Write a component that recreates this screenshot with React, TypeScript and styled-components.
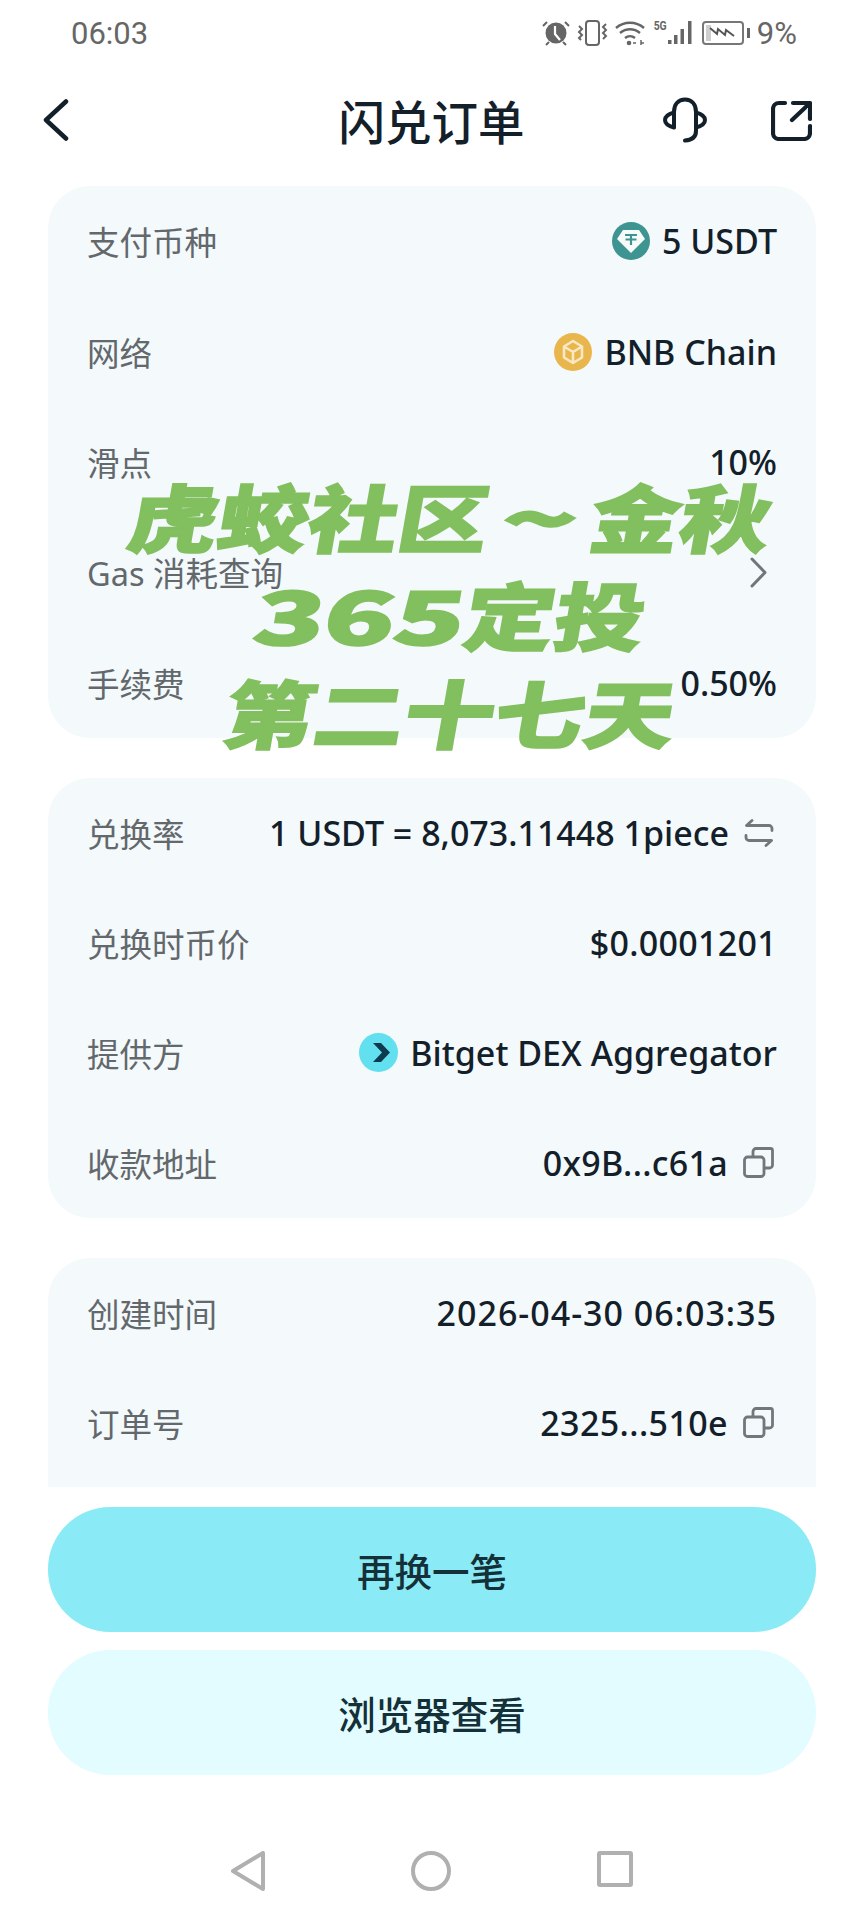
import styled, { createGlobalStyle } from "styled-components";
import type { ReactNode } from "react";

const GlobalStyle = createGlobalStyle`
  html, body {
    margin: 0;
    padding: 0;
    background: #fff;
  }
  * {
    box-sizing: border-box;
  }
`;

const Page = styled.div`
  position: relative;
  width: 864px;
  height: 1920px;
  overflow: hidden;
  display: flex;
  flex-direction: column;
  background: #fff;
  font-family: "Noto Sans", "Noto Sans CJK SC", sans-serif;
`;

const StatusBar = styled.div`
  height: 66px;
  padding: 0 67px 0 71px;
  display: flex;
  align-items: center;
  justify-content: space-between;
  color: #666;
  font-family: Roboto, "Noto Sans", sans-serif;
  font-size: 31px;
`;

const StatusIcons = styled.div`
  display: flex;
  align-items: center;
  gap: 7px;
`;

const FiveG = styled.span`
  font-size: 13px;
  font-weight: 700;
  align-self: flex-start;
  margin: 3px -7px 0 0;
  transform: scaleX(0.8);
`;

const Header = styled.div`
  height: 108px;
  padding: 0 52px 0 43px;
  display: grid;
  grid-template-columns: 1fr auto 1fr;
  align-items: center;
`;

const Title = styled.h1`
  margin: 0;
  font-size: 46.5px;
  font-weight: 500;
  color: #13202a;
  position: relative;
  left: 4px;
`;

const HeaderActions = styled.div`
  display: flex;
  align-items: center;
  justify-content: flex-end;
  gap: 64px;
`;

const Scroller = styled.div`
  height: 1313px;
  padding: 12px 48px 0;
  overflow: hidden;
  display: flex;
  flex-direction: column;
  gap: 40px;
`;

const Card = styled.section<{ $minHeight?: number }>`
  flex-shrink: 0;
  min-height: ${(p) => p.$minHeight ?? 0}px;
  padding: 0 39px;
  border-radius: 42px;
  background: #f4f9fb;
`;

const Row = styled.div<{ $height: number }>`
  height: ${(p) => p.$height}px;
  display: flex;
  align-items: center;
  justify-content: space-between;
`;

const Label = styled.span`
  color: #62686c;
  font-size: 32.5px;
`;

const Value = styled.span<{ $spacing?: number }>`
  display: flex;
  align-items: center;
  gap: 12px;
  color: #13202a;
  font-size: 34px;
  font-weight: 500;
  letter-spacing: ${(p) => p.$spacing ?? 0}px;
`;

const TrailingIcon = styled.span<{ $inset: number }>`
  display: flex;
  margin-left: 3px;
  margin-right: ${(p) => p.$inset}px;
`;

const Footer = styled.div`
  padding: 20px 48px 0;
  display: flex;
  flex-direction: column;
  gap: 18px;
`;

const ActionButton = styled.button<{ $primary?: boolean }>`
  height: 125px;
  border: none;
  border-radius: 62px;
  background: ${(p) => (p.$primary ? "#8aebf6" : "#e3fcff")};
  color: #143038;
  font-family: inherit;
  font-size: 37.5px;
  font-weight: 500;
`;

const NavBar = styled.div`
  flex: 1;
  padding: 76px 0 0 231px;
  display: flex;
  align-items: flex-start;
  gap: 146px;
`;

const Overlay = styled.div`
  position: absolute;
  top: 466px;
  left: 38px;
  right: 0;
  display: flex;
  flex-direction: column;
  align-items: center;
  color: #82bf5e;
  font-family: "Noto Sans CJK SC", sans-serif;
  font-size: 90px;
  font-weight: 900;
  line-height: 98px;
  white-space: nowrap;
  -webkit-text-stroke: 2px #82bf5e;
`;

const OverlayLine = styled.div`
  transform: skewX(-10deg) scaleY(0.82);
`;

const WideGlyphs = styled.span<{ $scale: number; $width: number }>`
  display: inline-block;
  width: ${(p) => p.$width}px;
  text-align: center;
  transform: scaleX(${(p) => p.$scale});
`;

const Back = () => (
  <svg width="26" height="42" viewBox="0 0 26 42" fill="none" stroke="#13202a" strokeWidth="4.5" strokeLinecap="round" strokeLinejoin="round">
    <path d="M23 2.500 3 21l20 18.500" />
  </svg>
);

const Headset = () => (
  <svg width="44" height="46" viewBox="0 0 44 46" fill="none" stroke="#13202a" strokeWidth="4" strokeLinecap="round" strokeLinejoin="round">
    <path d="M11 30V15C11 7 15.500 2.500 22 2.500S33 7 33 15v19c0 6-3.500 9-11 9.500" />
    <path d="M11 15.500C5.500 17 2 19.500 2 23s3.500 6 9 7.500" />
    <path d="M33 15.500c5.500 1.500 9 4 9 7.500s-3.500 6-9 7.500" />
  </svg>
);

const Share = () => (
  <svg width="41" height="41" viewBox="0 0 41 41" fill="none" stroke="#13202a" strokeWidth="4.2" strokeLinecap="round" strokeLinejoin="round">
    <path d="M14 3H8a6 6 0 0 0-6 6v24a6 6 0 0 0 6 6h25a6 6 0 0 0 6-6v-7" />
    <path d="M22 3h17v16M38 4 21 20" />
  </svg>
);

const Alarm = () => (
  <svg width="28" height="26" viewBox="0 0 28 26" fill="none">
    <circle cx="14" cy="13" r="10.500" fill="#666" />
    <path d="M13 6v8l5 6" stroke="#fff" strokeWidth="2.200" />
    <path d="M1 6l4-4M27 6l-4-4M4 25l3-3M24 25l-3-3" stroke="#666" strokeWidth="2" />
  </svg>
);

const Vibrate = () => (
  <svg width="31" height="26" viewBox="0 0 31 26" fill="none" stroke="#666" strokeWidth="2">
    <rect x="9" y="1" width="13" height="24" rx="3" />
    <path d="M2 6l3 3-3 3 3 3-3 3 2 2M29 4l-3 3 3 3-3 3 3 3-3 3" />
  </svg>
);

const Wifi = () => (
  <svg width="30" height="26" viewBox="0 0 30 26" fill="none" stroke="#666" strokeWidth="2.400">
    <path d="M1 8C9 1 21 1 29 8M5 13c6-5 14-5 20 0M10 18c3-2.500 7-2.500 10 0" />
    <circle cx="14" cy="23" r="2.300" fill="#666" stroke="none" />
    <path d="M21 23l-3 0M26 20v5M29 23h-3" strokeWidth="1.500" />
  </svg>
);

const Signal = () => (
  <svg width="27" height="26" viewBox="0 0 27 26" fill="#666">
    <rect x="0" y="20" width="3.500" height="4" />
    <rect x="6" y="15" width="3.500" height="9" />
    <rect x="12.500" y="9" width="3.500" height="15" />
    <rect x="20" y="1" width="3.500" height="23" />
  </svg>
);

const Battery = () => (
  <svg width="48" height="26" viewBox="0 0 48 26" fill="none">
    <rect x="1" y="2" width="40" height="22" rx="3" stroke="#777" strokeWidth="2" />
    <rect x="4" y="5" width="5" height="16" fill="#cfcfcf" />
    <path d="M8 8l7 6 1-5 7 6 1-5 8 6" stroke="#555" strokeWidth="2" />
    <rect x="45" y="8" width="3" height="10" fill="#666" />
  </svg>
);

const TetherLogo = () => (
  <svg width="38" height="38" viewBox="0 0 38 38">
    <circle cx="19" cy="19" r="19" fill="#3d9490" />
    <path d="M11 8h16l6 9-14 14L5 17z" fill="#f6fbfa" />
    <path d="M13 13h12M13.500 17.500h11M19 13v10" stroke="#3d9490" strokeWidth="2.200" fill="none" />
  </svg>
);

const BnbLogo = () => (
  <svg width="38" height="38" viewBox="0 0 38 38">
    <circle cx="19" cy="19" r="19" fill="#e8b64c" />
    <path d="M19 8l9 5.500v11L19 30l-9-5.500v-11zM10 13.500l9 5.500 9-5.500M19 19v11" fill="none" stroke="#f8e9c4" strokeWidth="2.600" strokeLinejoin="round" />
  </svg>
);

const BitgetLogo = () => (
  <svg width="39" height="39" viewBox="0 0 39 39">
    <circle cx="19.500" cy="19.500" r="19.500" fill="#62e0ef" />
    <path d="M14 10h8l9 9.500L22 29h-8l9-9.500z" fill="#0e3a50" />
  </svg>
);

const SwapIcon = () => (
  <svg width="30" height="28" viewBox="0 0 30 28" fill="none" stroke="#71777b" strokeWidth="2.800" strokeLinecap="round" strokeLinejoin="round">
    <path d="M8 1.500 2.500 6.500H25a3 3 0 0 1 3 3v2" />
    <path d="M22 26.500l5.500-5H5a3 3 0 0 1-3-3v-2" />
  </svg>
);

const CopyIcon = () => (
  <svg width="31" height="31" viewBox="0 0 31 31" fill="none" stroke="#71777b" strokeWidth="2.800" strokeLinejoin="round">
    <rect x="1.500" y="10" width="19.500" height="19.500" rx="3" />
    <path d="M10 10V4.500a3 3 0 0 1 3-3h14.500a2 2 0 0 1 2 2V18a3 3 0 0 1-3 3H21" />
  </svg>
);

const ChevronRight = () => (
  <svg width="17" height="31" viewBox="0 0 17 31" fill="none" stroke="#70767a" strokeWidth="3" strokeLinecap="round" strokeLinejoin="round">
    <path d="M2 2l13 13.500L2 29" />
  </svg>
);

const NavBack = () => (
  <svg width="34" height="40" viewBox="0 0 34 40" fill="none" stroke="#b0b0b0" strokeWidth="4" strokeLinejoin="round">
    <path d="M32 2v36L2 20z" />
  </svg>
);

const NavHome = () => (
  <svg width="40" height="40" viewBox="0 0 40 40" fill="none" stroke="#b0b0b0" strokeWidth="4">
    <circle cx="20" cy="20" r="18" />
  </svg>
);

const NavRecent = () => (
  <svg width="36" height="36" viewBox="0 0 36 36" fill="none" stroke="#b0b0b0" strokeWidth="4" strokeLinejoin="round">
    <rect x="2" y="2" width="32" height="32" rx="1" />
  </svg>
);

type RowData = {
  label: string;
  value?: string;
  spacing?: number;
  before?: ReactNode;
  after?: ReactNode;
  inset?: number;
};

const paymentRows: RowData[] = [
  { label: "支付币种", value: "5 USDT", before: <TetherLogo /> },
  { label: "网络", value: "BNB Chain", before: <BnbLogo /> },
  { label: "滑点", value: "10%" },
  { label: "Gas 消耗查询", after: <ChevronRight />, inset: 10 },
  { label: "手续费", value: "0.50%" },
];

const swapRows: RowData[] = [
  { label: "兑换率", value: "1 USDT = 8,073.11448 1piece", after: <SwapIcon />, inset: 3 },
  { label: "兑换时币价", value: "$0.0001201", spacing: 0.3 },
  { label: "提供方", value: "Bitget DEX Aggregator", before: <BitgetLogo /> },
  { label: "收款地址", value: "0x9B...c61a", spacing: 0.3, after: <CopyIcon />, inset: 3 },
];

const orderRows: RowData[] = [
  { label: "创建时间", value: "2026-04-30 06:03:35", spacing: 1 },
  { label: "订单号", value: "2325...510e", spacing: 0.4, after: <CopyIcon />, inset: 3 },
];

const InfoCard = ({ rows, rowHeight, minHeight }: { rows: RowData[]; rowHeight: number; minHeight?: number }) => (
  <Card $minHeight={minHeight}>
    {rows.map((row) => (
      <Row key={row.label} $height={rowHeight}>
        <Label>{row.label}</Label>
        <Value $spacing={row.spacing}>
          {row.before}
          {row.value}
          {row.after && <TrailingIcon $inset={row.inset ?? 0}>{row.after}</TrailingIcon>}
        </Value>
      </Row>
    ))}
  </Card>
);

export default function App() {
  return (
    <Page>
      <GlobalStyle />
      <StatusBar>
        <span>06:03</span>
        <StatusIcons>
          <Alarm />
          <Vibrate />
          <Wifi />
          <FiveG>5G</FiveG>
          <Signal />
          <Battery />
          <span>9%</span>
        </StatusIcons>
      </StatusBar>

      <Header>
        <Back />
        <Title>闪兑订单</Title>
        <HeaderActions>
          <Headset />
          <Share />
        </HeaderActions>
      </Header>

      <Scroller>
        <InfoCard rows={paymentRows} rowHeight={110.4} />
        <InfoCard rows={swapRows} rowHeight={110} />
        <InfoCard rows={orderRows} rowHeight={110} minHeight={320} />
      </Scroller>

      <Footer>
        <ActionButton $primary>再换一笔</ActionButton>
        <ActionButton>浏览器查看</ActionButton>
      </Footer>

      <NavBar>
        <NavBack />
        <NavHome />
        <NavRecent />
      </NavBar>

      <Overlay>
        <OverlayLine>
          虎蛟社区<WideGlyphs $scale={1.4} $width={102}>~</WideGlyphs>金秋
        </OverlayLine>
        <OverlayLine>
          <WideGlyphs $scale={1.3} $width={70}>3</WideGlyphs>
          <WideGlyphs $scale={1.3} $width={70}>6</WideGlyphs>
          <WideGlyphs $scale={1.3} $width={70}>5</WideGlyphs>
          定投
        </OverlayLine>
        <OverlayLine>第二十七天</OverlayLine>
      </Overlay>
    </Page>
  );
}
